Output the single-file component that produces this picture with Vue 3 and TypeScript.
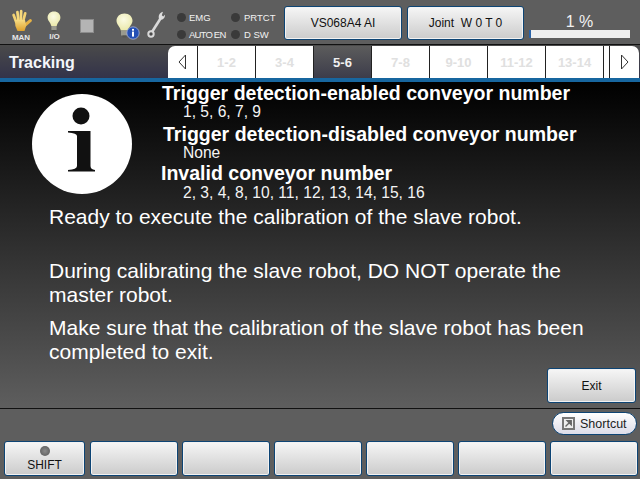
<script setup lang="ts">
const tabs: string[] = ['1-2', '3-4', '5-6', '7-8', '9-10', '11-12', '13-14']
const softKeys: number[] = [1, 2, 3, 4, 5, 6]
</script>

<template>
  <div class="screen">
    <header class="top">
      <div class="icon-col hand-col">
        <svg width="22" height="23" viewBox="0 0 22 23">
          <defs>
            <linearGradient id="handFill" x1="0" y1="0" x2="0" y2="1" gradientUnits="objectBoundingBox">
              <stop offset="0" stop-color="#f7dc84" />
              <stop offset="1" stop-color="#dfa12c" />
            </linearGradient>
            <radialGradient id="glass" cx=".45" cy=".35" r=".7">
              <stop offset="0" stop-color="#fbfbe4" />
              <stop offset="1" stop-color="#e9e7a6" />
            </radialGradient>
          </defs>
          <g fill="none" stroke-linecap="round" stroke-width="2.7">
            <path d="M6.2 13 L3.6 6" stroke="#f3d272" />
            <path d="M8.4 11 L7.4 3" stroke="#f5d87c" />
            <path d="M10.8 11 L11.2 2.2" stroke="#f5d87c" />
            <path d="M13.2 12 L15.2 4.4" stroke="#f3d272" />
            <path d="M14 17 L20.3 11.6" stroke="#e6b246" stroke-width="3" />
          </g>
          <path d="M5 11 H15 L16.2 16.5 L14.5 22 H7.5 L5.4 17 Z" fill="url(#handFill)" />
        </svg>
        <span class="icon-label">MAN</span>
      </div>
      <div class="icon-col bulb-col">
        <svg width="14" height="21" viewBox="0 0 14 21">
          <path d="M7 .5 C3 .5 .6 3.2 .6 6.6 C.6 9.8 3.5 11.5 4.3 15 L9.7 15 C10.5 11.5 13.4 9.8 13.4 6.6 C13.4 3.2 11 .5 7 .5 Z" fill="url(#glass)" />
          <rect x="4.4" y="15" width="5.2" height="4" fill="#9a9a8e" />
          <rect x="5.5" y="19" width="3" height="1.6" fill="#55554f" />
        </svg>
        <span class="icon-label">I/O</span>
      </div>
      <div class="stop-square"></div>
      <div class="info-bulb">
        <svg width="24" height="27" viewBox="0 0 24 27">
          <g transform="translate(-1 0)">
            <path d="M9.5 .5 C4.8 .5 1.5 3.6 1.5 7.8 C1.5 11.6 5 13.5 5.8 17.5 L13 17.5 C13.8 13.5 17.5 11.6 17.5 7.8 C17.5 3.6 14.2 .5 9.5 .5 Z" fill="url(#glass)" />
            <rect x="6" y="17.5" width="7" height="5" fill="#9a9a8e" />
            <rect x="7.5" y="22.5" width="4" height="2" fill="#55554f" />
          </g>
          <circle cx="17" cy="20" r="6.2" fill="#2450b5" stroke="#aab4d6" stroke-width=".8" />
          <rect x="16" y="18.6" width="2" height="5" fill="#fff" />
          <rect x="16" y="15.9" width="2" height="1.8" fill="#fff" />
        </svg>
      </div>
      <div class="wrench">
        <svg width="18" height="27" viewBox="0 0 18 27">
          <path d="M5 21 L13.5 7.5" stroke="#d9d9d9" stroke-width="2.6" fill="none" />
          <circle cx="4" cy="23" r="2.7" fill="#4a4a4a" stroke="#d9d9d9" stroke-width="2" />
          <path d="M12.3 8.5 C10.8 5.5 12 2 16 .8 L14.8 4.2 L16.2 5.4 L18 3.8 C18.2 7 15.5 9.6 12.3 8.5 Z" fill="#dedede" />
        </svg>
      </div>
      <div class="leds">
        <span class="led-item"><i class="led"></i>EMG</span>
        <span class="led-item second-col"><i class="led"></i>PRTCT</span>
        <span class="led-item tight"><i class="led"></i>AUTO EN</span>
        <span class="led-item second-col"><i class="led"></i>D SW</span>
      </div>
      <button class="btn robot">VS068A4 AI</button>
      <button class="btn joint">Joint&nbsp; W 0 T 0</button>
      <div class="speed">
        <span class="speed-text">1 %</span>
        <div class="speed-track"><div class="speed-fill"></div></div>
      </div>
    </header>

    <nav class="titlebar">
      <div class="title">Tracking</div>
      <div class="tabs">
        <div class="arrow left">
          <svg width="9" height="16" viewBox="0 0 9 16"><path d="M7.5 1 L1 8 L7.5 15 Z" fill="#fff" stroke="#333" /></svg>
        </div>
        <div v-for="t in tabs" :key="t" class="tab" :class="{ active: t === '5-6' }">{{ t }}</div>
        <div class="tab stub"></div>
        <div class="arrow right">
          <svg width="9" height="16" viewBox="0 0 9 16"><path d="M1.5 1 L8 8 L1.5 15 Z" fill="#fff" stroke="#333" /></svg>
        </div>
      </div>
    </nav>

    <main class="panel">
      <div class="upper">
        <div class="badge">
          <svg width="100" height="100" viewBox="0 0 100 100">
            <circle cx="50" cy="50" r="50" fill="#fff" />
            <circle cx="49" cy="22" r="8.5" fill="#111" />
            <path d="M36 37 H58.5 V72 Q58.5 75.5 63 76 V77.5 H36 V76 Q45 75.5 45 72 V42 Q45 39 36 38.5 Z" fill="#111" />
          </svg>
        </div>
        <div class="lists">
          <div class="head">Trigger detection-enabled conveyor number</div>
          <div class="vals">1, 5, 6, 7, 9</div>
          <div class="head second">Trigger detection-disabled conveyor number</div>
          <div class="vals">None</div>
          <div class="head third">Invalid conveyor number</div>
          <div class="vals last">2, 3, 4, 8, 10, 11, 12, 13, 14, 15, 16</div>
        </div>
      </div>
      <div class="message">
        <p class="ready">Ready to execute the calibration of the slave robot.</p>
        <p class="during">During calibrating the slave robot, DO NOT operate the<br />master robot.</p>
        <p class="sure">Make sure that the calibration of the slave robot has been<br />completed to exit.</p>
      </div>
      <div class="actions"><button class="btn exit">Exit</button></div>
    </main>

    <footer class="bottom">
      <div class="shortcut-row">
        <button class="shortcut">
          <svg width="13" height="13" viewBox="0 0 13 13">
            <rect x="1" y="1" width="11" height="11" fill="#eee" stroke="#777" stroke-width="2" />
            <path d="M3.5 9.5 L8 5 M5.2 3.8 H9.2 V7.8 Z" stroke="#666" stroke-width="1.4" fill="#666" />
          </svg>
          <span>Shortcut</span>
        </button>
      </div>
      <div class="keys">
        <button class="btn key shift"><i class="shift-led"></i><span>SHIFT</span></button>
        <button v-for="k in softKeys" :key="k" class="btn key"></button>
      </div>
    </footer>
  </div>
</template>

<style scoped>
.screen {
  width: 640px;
  height: 479px;
  display: flex;
  flex-direction: column;
  overflow: hidden;
  background: #5e5e5e;
  font-family: "Liberation Sans", Arial, sans-serif;
}
.top {
  height: 44px;
  flex: none;
  display: flex;
  align-items: flex-start;
  border-bottom: 1px solid #111;
  background: #5e5e5e;
}
.icon-col {
  display: flex;
  flex-direction: column;
  align-items: center;
}
.hand-col {
  width: 22px;
  margin: 9px 0 0 10px;
}
.bulb-col {
  width: 14px;
  margin: 11px 0 0 15px;
}
.icon-label {
  font-size: 8px;
  line-height: 9px;
  margin-top: 1px;
  font-weight: bold;
  color: #e8e8e8;
  white-space: nowrap;
}
.bulb-col .icon-label {
  margin-left: 1px;
  margin-top: 0;
}
.stop-square {
  width: 14px;
  height: 14px;
  margin: 19px 0 0 19px;
  background: #b4b4b4;
  border: 1px solid #8c8c8c;
  box-sizing: border-box;
}
.info-bulb {
  width: 24px;
  margin: 13px 0 0 22px;
}
.wrench {
  width: 18px;
  margin: 11px 0 0 7px;
}
.leds {
  width: 103px;
  margin: 10px 0 0 16px;
  display: grid;
  grid-template-columns: 54px 49px;
  row-gap: 3px;
}
.led-item {
  display: flex;
  align-items: center;
  height: 14px;
  font-size: 9.5px;
  color: #f2f2f2;
  white-space: nowrap;
}
.led {
  width: 9px;
  height: 9px;
  border-radius: 50%;
  background: #3a3a3a;
  margin: 0 3px 0 -4px;
}
.second-col .led {
  margin-right: 4px;
}
.tight {
  letter-spacing: -0.8px;
}
.btn {
  box-sizing: border-box;
  padding: 0;
  border: 1px solid #0d4474;
  border-radius: 3px;
  background: linear-gradient(#f6f6f6, #cbcbcb);
  box-shadow: inset 0 0 0 1px #f2f2f2;
  font-family: inherit;
  font-size: 12px;
  color: #111;
}
.robot {
  width: 118px;
  height: 34px;
  margin: 6px 0 0 0;
}
.joint {
  width: 117px;
  height: 34px;
  margin: 6px 0 0 5px;
}
.speed {
  width: 101px;
  margin: 0 0 0 5px;
  display: flex;
  flex-direction: column;
  align-items: stretch;
}
.speed-text {
  height: 30px;
  line-height: 44px;
  text-align: center;
  font-size: 16px;
  color: #f2f2f2;
}
.speed-track {
  height: 8px;
  background: #efefef;
}
.speed-fill {
  width: 2px;
  height: 100%;
  background: #2a63a8;
}
.titlebar {
  height: 33px;
  flex: none;
  display: flex;
  background: linear-gradient(#4a4a4a, #33334a);
  border-bottom: 4px solid #17669f;
}
.title {
  width: 168px;
  padding-left: 9px;
  box-sizing: border-box;
  font-size: 16px;
  font-weight: bold;
  line-height: 36px;
  color: #f4f6fa;
}
.tabs {
  display: flex;
  width: 471px;
  margin-top: 1px;
  background: #fff;
  border-radius: 7px 7px 0 0;
  overflow: hidden;
}
.arrow {
  display: flex;
  align-items: center;
  justify-content: center;
  flex: none;
}
.arrow.left {
  width: 30px;
  border-right: 1px solid #222;
  box-sizing: border-box;
}
.arrow.right {
  width: 29px;
}
.tab {
  width: 58px;
  box-sizing: border-box;
  border-right: 1px solid #222;
  text-align: center;
  line-height: 34px;
  font-size: 13px;
  font-weight: bold;
  color: #e0e0e0;
  flex: none;
}
.tab.active {
  background: linear-gradient(#5c5c5c, #3c3c4a);
  color: #f0f0f0;
}
.tab.stub {
  width: 6px;
}
.panel {
  height: 327px;
  flex: none;
  box-sizing: border-box;
  background: linear-gradient(#000, #5e5e5e);
  display: flex;
  flex-direction: column;
  border-bottom: 1px solid #111;
}
.upper {
  display: flex;
  height: 123px;
}
.badge {
  width: 100px;
  margin: 12px 0 0 32px;
  flex: none;
}
.lists {
  margin-left: 30px;
  color: #fff;
}
.head {
  font-size: 19.55px;
  font-weight: bold;
  line-height: 22px;
  white-space: nowrap;
}
.head.second {
  margin-left: 1px;
  margin-top: 3px;
}
.head.third {
  margin-left: -1px;
  margin-top: 1px;
}
.vals {
  font-size: 15.6px;
  line-height: 16px;
  margin-left: 21px;
  color: #f4f4f4;
}
.vals.last {
  margin-top: 1px;
}
.message {
  margin-left: 49px;
  color: #fff;
  font-size: 21px;
  line-height: 24px;
}
.message p {
  margin: 0;
}
.during {
  padding-top: 30px;
}
.sure {
  padding-top: 9px;
}
.actions {
  margin-top: auto;
  align-self: flex-end;
  display: flex;
  padding: 0 4px 5px 0;
}
.exit {
  width: 89px;
  height: 35px;
}
.bottom {
  flex: 1;
  display: flex;
  flex-direction: column;
}
.shortcut-row {
  display: flex;
  justify-content: flex-end;
  padding: 3px 3px 0 0;
}
.shortcut {
  width: 85px;
  height: 23px;
  box-sizing: border-box;
  display: flex;
  align-items: center;
  gap: 5px;
  padding: 0 0 0 9px;
  border: 1px solid #0d4474;
  border-radius: 12px;
  background: linear-gradient(#fff, #dcdce8);
  font-family: inherit;
  font-size: 12.5px;
  color: #222;
}
.keys {
  display: flex;
  gap: 4px;
  padding: 6px 2px 0 4px;
}
.key {
  width: 88px;
  height: 35px;
  flex: none;
}
.shift {
  width: 81px;
  margin-right: 1px;
  display: flex;
  flex-direction: column;
  align-items: center;
  justify-content: flex-start;
}
.shift-led {
  width: 10px;
  height: 10px;
  margin-top: 4px;
  border-radius: 50%;
  background: radial-gradient(#8a8a8a, #555);
}
.shift span {
  line-height: 15px;
  margin-top: 2px;
}
</style>
